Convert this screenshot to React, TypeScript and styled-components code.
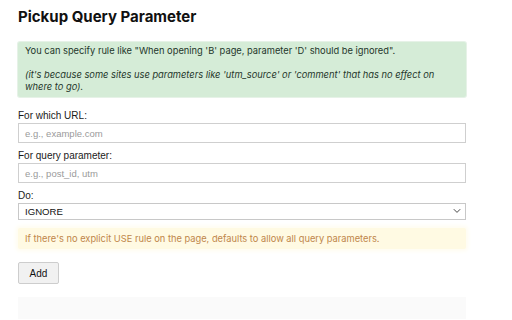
import styled, { createGlobalStyle } from "styled-components";

const GlobalStyle = createGlobalStyle`
  body {
    margin: 0;
    background: #fff;
    font-family: Inter, "Liberation Sans", sans-serif;
    color: #222;
  }
`

const Page = styled.div`
  padding: 0 46px 0 18px;
  display: flex;
  flex-direction: column;
`

const Title = styled.h1`
  font-size: 15px;
  font-weight: 700;
  line-height: 18px;
  margin: 8px 0 16px;
  color: #111;
`

const Note = styled.div<{ $tone: "info" | "warn" }>`
  background: ${p => (p.$tone === "info" ? "#d5ecd7" : "#fffae3")};
  color: ${p => (p.$tone === "info" ? "#24362a" : "#c0864a")};
  box-shadow: ${p => (p.$tone === "info" ? "0 0 0 1px #e6f2e7" : "0 0 4px 2px #fffcef")};
  border-radius: 2px;
  font-size: 9.3px;
  line-height: 12px;
  padding: ${p => (p.$tone === "info" ? "3px 7px 4px" : "5px 7px 4px")};
  margin-top: ${p => (p.$tone === "info" ? "0" : "1px")};
  & p {
    margin: 0;
  }
  & p + p {
    margin-top: 12px;
    font-style: italic;
  }
`

const Form = styled.div`
  display: flex;
  flex-direction: column;
  margin-top: 13px;
`

const Field = styled.div`
  margin-bottom: 7px;
`

const Label = styled.label`
  display: block;
  font-family: "Liberation Sans", Arial, sans-serif;
  font-size: 10px;
  line-height: 12px;
  color: #1a1a1a;
  margin-bottom: 1px;
`

const TextInput = styled.input`
  box-sizing: border-box;
  display: block;
  width: 100%;
  height: 20px;
  border: 1px solid #cfcfcf;
  border-radius: 0;
  padding: 0 6px;
  font-family: "Liberation Sans", Arial, sans-serif;
  font-size: 9.5px;
  color: #333;
  &::placeholder {
    color: #9a9a9a;
  }
`

const SelectWrap = styled.div`
  position: relative;
  margin-top: 1px;
`

const Select = styled.select`
  box-sizing: border-box;
  display: block;
  width: 100%;
  height: 17px;
  border: 1px solid #c8c8c8;
  border-radius: 0;
  background: #fff;
  appearance: none;
  font-family: "Liberation Sans", Arial, sans-serif;
  font-size: 9.6px;
  padding: 0 6px;
  color: #111;
`

const Chevron = styled.svg`
  position: absolute;
  right: 5px;
  top: 5px;
  width: 8px;
  height: 6px;
  pointer-events: none;
`

const AddButton = styled.button`
  align-self: flex-start;
  width: 41px;
  height: 22px;
  margin-top: 13px;
  background: #f1f1f1;
  border: 1px solid #cdcdcd;
  border-radius: 2px;
  font-family: "Liberation Sans", Arial, sans-serif;
  font-size: 10px;
  color: #111;
  padding: 0;
`

const RuleList = styled.div`
  background: #fafafa;
  height: 22px;
  margin-top: 13px;
`

const App = () => {
  return (
    <>
      <GlobalStyle />
      <Page>
        <Title>Pickup Query Parameter</Title>
        <Note $tone="info">
          <p>You can specify rule like "When opening 'B' page, parameter 'D' should be ignored".</p>
          <p>(it's because some sites use parameters like 'utm_source' or 'comment' that has no effect on where to go).</p>
        </Note>
        <Form>
          <Field>
            <Label>For which URL:</Label>
            <TextInput type="text" placeholder="e.g., example.com" />
          </Field>
          <Field>
            <Label>For query parameter:</Label>
            <TextInput type="text" placeholder="e.g., post_id, utm" />
          </Field>
          <Field>
            <Label>Do:</Label>
            <SelectWrap>
              <Select defaultValue="IGNORE">
                <option>IGNORE</option>
                <option>USE</option>
              </Select>
              <Chevron viewBox="0 0 8 6">
                <path d="M0.8 1.2 L4 4.4 L7.2 1.2" fill="none" stroke="#333" strokeWidth="0.9" />
              </Chevron>
            </SelectWrap>
          </Field>
          <Note $tone="warn">
            If there's no explicit USE rule on the page, defaults to allow all query parameters.
          </Note>
          <AddButton>Add</AddButton>
        </Form>
        <RuleList />
      </Page>
    </>
  )
}

export default App
